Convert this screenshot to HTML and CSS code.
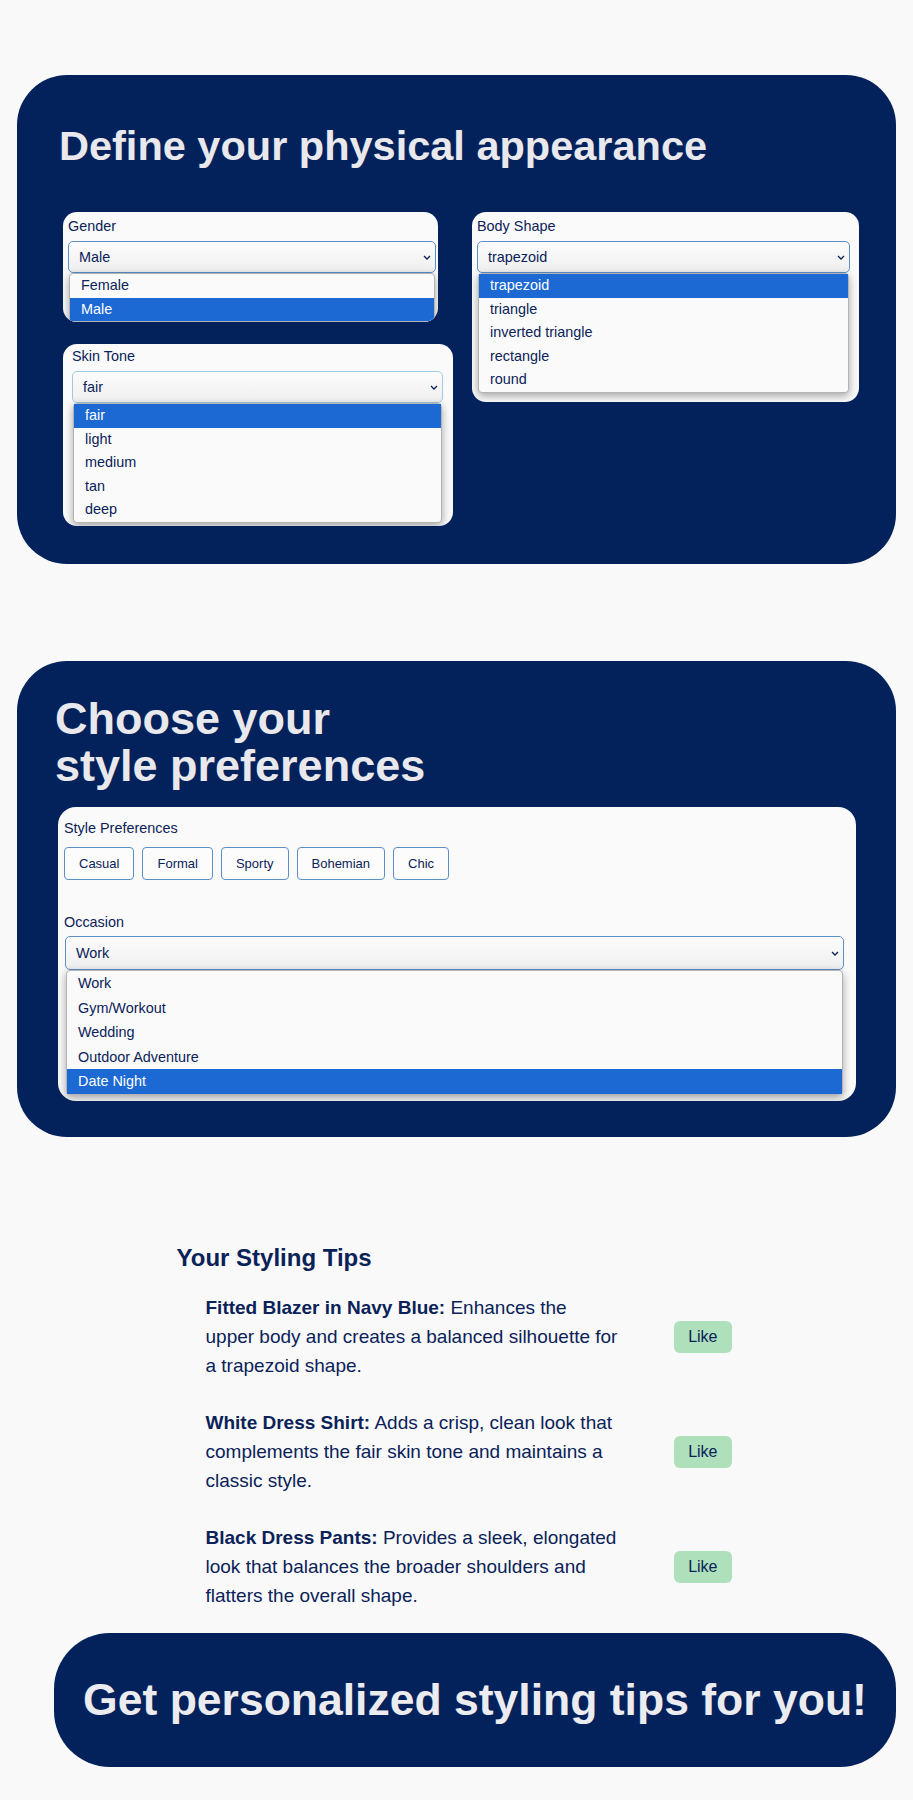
FILE: index.html
```html
<!DOCTYPE html>
<html lang="en">
<head>
  <meta charset="UTF-8">
  <title>Personal Styling</title>
  <link rel="stylesheet" href="styles.css">
</head>
<body>

  <section class="panel panel-appearance">
    <h1 class="panel-title">Define your physical appearance</h1>

    <div class="fields">
      <div class="col col-left">
        <div class="field field-gender">
          <label>Gender</label>
          <div class="select">
            <span>Male</span>
            <svg width="8" height="5" viewBox="0 0 8 5"><path d="M1 1l3 3 3-3" fill="none" stroke="#0a2258" stroke-width="1.3"/></svg>
          </div>
          <ul class="options">
            <li>Female</li>
            <li class="active">Male</li>
          </ul>
        </div>

        <div class="field field-skin">
          <label>Skin Tone</label>
          <div class="select select-light">
            <span>fair</span>
            <svg width="8" height="5" viewBox="0 0 8 5"><path d="M1 1l3 3 3-3" fill="none" stroke="#0a2258" stroke-width="1.3"/></svg>
          </div>
          <ul class="options">
            <li class="active">fair</li>
            <li>light</li>
            <li>medium</li>
            <li>tan</li>
            <li>deep</li>
          </ul>
        </div>
      </div>

      <div class="col col-right">
        <div class="field field-body">
          <label>Body Shape</label>
          <div class="select">
            <span>trapezoid</span>
            <svg width="8" height="5" viewBox="0 0 8 5"><path d="M1 1l3 3 3-3" fill="none" stroke="#0a2258" stroke-width="1.3"/></svg>
          </div>
          <ul class="options">
            <li class="active">trapezoid</li>
            <li>triangle</li>
            <li>inverted triangle</li>
            <li>rectangle</li>
            <li>round</li>
          </ul>
        </div>
      </div>
    </div>
  </section>

  <section class="panel panel-style">
    <h1 class="panel-title panel-title-big">Choose your<br>style preferences</h1>

    <div class="field field-prefs">
      <label>Style Preferences</label>
      <div class="chips">
        <button class="chip">Casual</button>
        <button class="chip">Formal</button>
        <button class="chip">Sporty</button>
        <button class="chip">Bohemian</button>
        <button class="chip">Chic</button>
      </div>

      <label class="label-occasion">Occasion</label>
      <div class="select select-tall">
        <span>Work</span>
        <svg width="8" height="5" viewBox="0 0 8 5"><path d="M1 1l3 3 3-3" fill="none" stroke="#0a2258" stroke-width="1.3"/></svg>
      </div>
      <ul class="options options-tall">
        <li>Work</li>
        <li>Gym/Workout</li>
        <li>Wedding</li>
        <li>Outdoor Adventure</li>
        <li class="active">Date Night</li>
      </ul>
    </div>
  </section>

  <section class="tips">
    <h2>Your Styling Tips</h2>
    <ul class="tip-list">
      <li class="tip">
        <p><strong>Fitted Blazer in Navy Blue:</strong> Enhances the upper body and creates a balanced silhouette for a trapezoid shape.</p>
        <button class="like">Like</button>
      </li>
      <li class="tip">
        <p><strong>White Dress Shirt:</strong> Adds a crisp, clean look that complements the fair skin tone and maintains a classic style.</p>
        <button class="like">Like</button>
      </li>
      <li class="tip">
        <p><strong>Black Dress Pants:</strong> Provides a sleek, elongated look that balances the broader shoulders and flatters the overall shape.</p>
        <button class="like">Like</button>
      </li>
    </ul>
  </section>

  <div class="cta">Get personalized styling tips for you!</div>

</body>
</html>
```

FILE: styles.css
```css
body {
  margin: 0;
  padding-top: 75px;
  background: #f9f9f9;
  font-family: "Liberation Sans", Arial, sans-serif;
  color: #0a2258;
}

/* big navy panels */
.panel {
  margin: 0 17px;
  background: #03225c;
  border-radius: 50px;
}

.panel-appearance {
  padding: 47px 37px 38px 46px;
}

.panel-style {
  margin-top: 97px;
  padding: 34px 40px 36px 38px;
}

.panel-title {
  margin: 0 0 42px -4px;
  font-size: 41.5px;
  line-height: 48px;
  font-weight: bold;
  color: #e9e9ed;
}

.panel-title-big {
  margin: 0 0 18px 0;
  font-size: 45px;
  line-height: 47px;
}

/* form cards */
.fields {
  display: flex;
  gap: 19px;
  align-items: flex-start;
}

.col {
  display: flex;
  flex-direction: column;
  align-items: flex-start;
  gap: 22px;
}

.col-left { width: 390px; }
.col-right { width: 387px; }

.field {
  box-sizing: border-box;
  background: #fafafa;
  border-radius: 14px;
  overflow: hidden;
  font-size: 14.4px;
}

.field label {
  display: block;
  line-height: 16px;
  margin-bottom: 7px;
}

.field-gender { width: 375px; padding: 6px 2px 0 5px; }
.field-skin { width: 390px; padding: 4px 10px 3.5px 9px; }
.field-body { width: 387px; padding: 6px 9px 9px 5px; }

.select {
  box-sizing: border-box;
  height: 32px;
  display: flex;
  align-items: center;
  justify-content: space-between;
  padding: 0 4px 0 10px;
  border: 1px solid #5b8fc6;
  border-radius: 5px;
  background: linear-gradient(#fcfcfc, #efefef);
}

.select-light { border-color: #9fc9e0; }

.options {
  list-style: none;
  margin: 0 1px;
  padding: 0;
  border: 1px solid #b4b4b4;
  border-radius: 4px;
  background: #fafafa;
  box-shadow: 0 3px 9px rgba(0, 0, 0, 0.35);
}

.options li {
  height: 23.5px;
  line-height: 23.5px;
  padding-left: 11px;
}

.options li.active {
  background: #1c69d4;
  color: #fff;
}

/* style preferences */
.field-prefs {
  margin-left: 3px;
  padding: 13px 12px 6.5px 6px;
  border-radius: 18px;
}

.field-prefs label { margin-bottom: 11px; }

.chips {
  display: flex;
  gap: 8px;
}

.chip {
  height: 33px;
  padding: 0 14px;
  border: 1px solid #5b8fc6;
  border-radius: 4px;
  background: #fcfcfc;
  color: #0a2258;
  font-family: inherit;
  font-size: 13px;
}

.field-prefs .label-occasion {
  margin: 34px 0 6px;
}

.select-tall {
  height: 34px;
  margin-left: 1px;
}

.options-tall { margin: 0 1px 0 2px; }

.options-tall li {
  height: 24.5px;
  line-height: 24.5px;
}

/* tips */
.tips {
  width: 560px;
  margin: 107px auto 0;
}

.tips h2 {
  margin: 0 0 21px;
  font-size: 24px;
  line-height: 28px;
}

.tip-list {
  list-style: none;
  margin: 0;
  padding: 0 5px 0 29px;
}

.tip {
  display: flex;
  justify-content: space-between;
  align-items: center;
  margin-bottom: 28px;
}

.tip:last-child { margin-bottom: 0; }

.tip p {
  width: 413.5px;
  margin: 0;
  font-size: 19px;
  line-height: 29px;
}

.like {
  padding: 7px 14px;
  border: none;
  border-radius: 6px;
  background: #ade0bb;
  color: #0a2258;
  font-family: inherit;
  font-size: 16px;
  line-height: 18px;
}

/* call to action */
.cta {
  margin: 23px 17px 32px 54px;
  padding: 41px 0;
  background: #03225c;
  border-radius: 56px;
  color: #ececf0;
  text-align: center;
  font-size: 44.5px;
  line-height: 52px;
  font-weight: bold;
}
```
